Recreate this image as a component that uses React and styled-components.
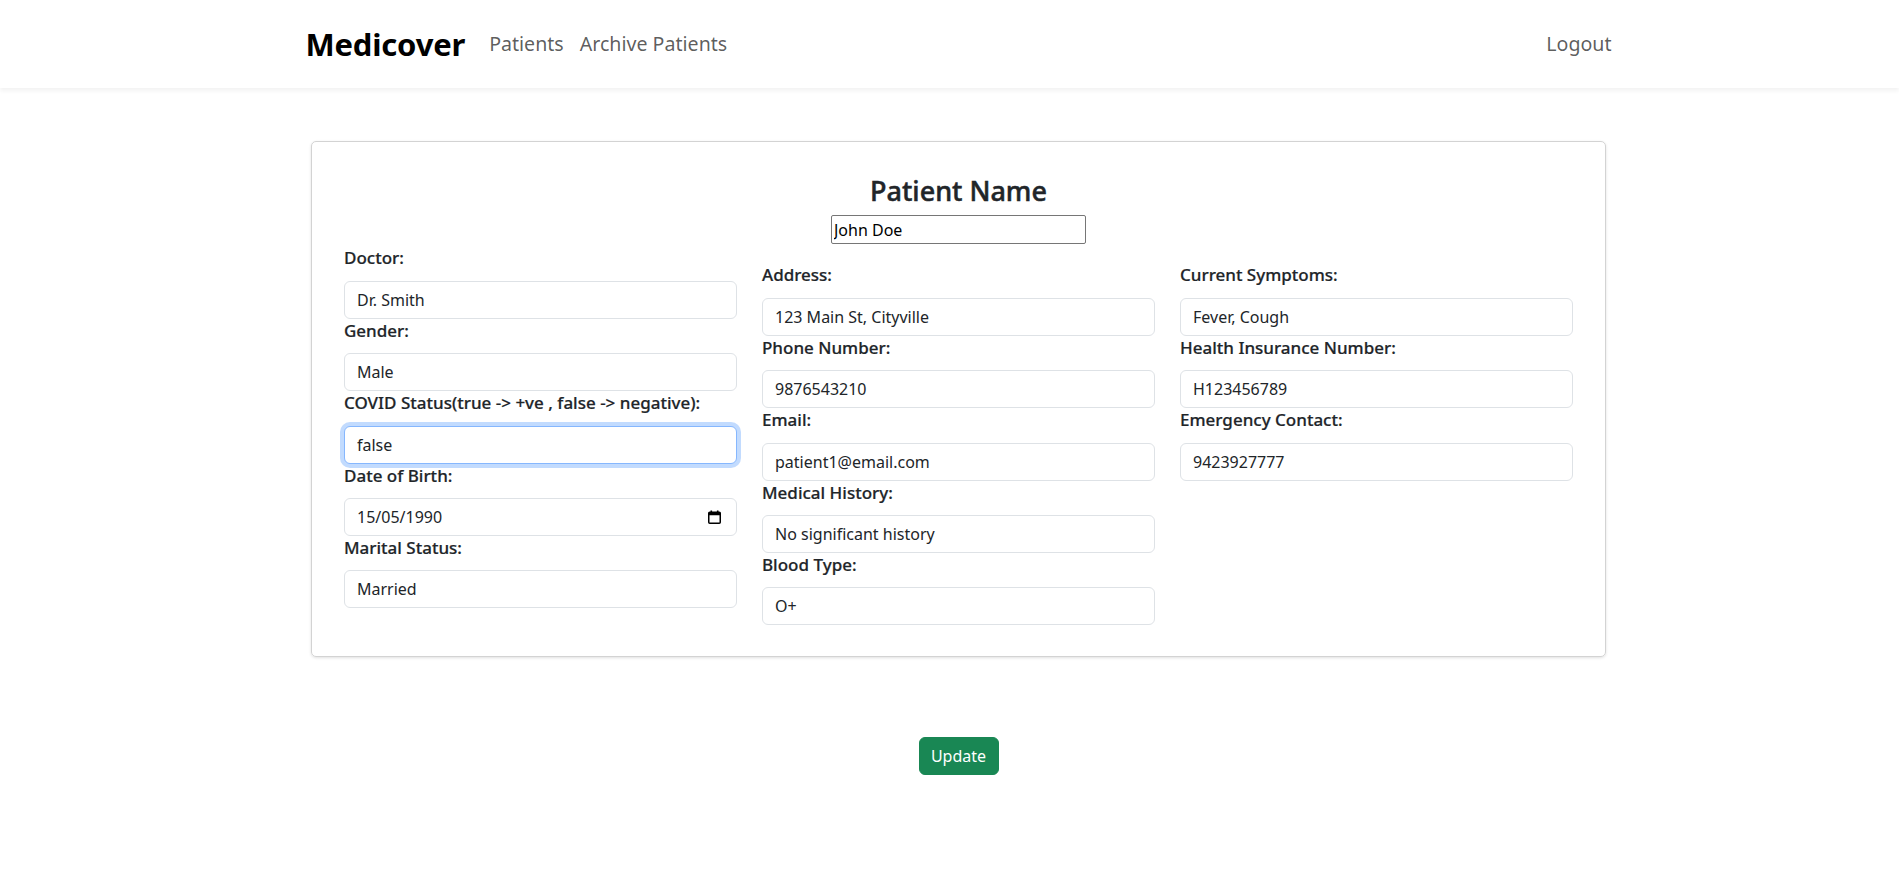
import React from 'react';
import styled, { createGlobalStyle, css } from 'styled-components';

const GlobalStyle = createGlobalStyle`
    html, body {
        margin: 0;
        padding: 0;
        background: #fff;
    }
    body {
        font-family: "Noto Sans", "Open Sans", sans-serif;
        font-size: 16px;
        line-height: 1.5;
        color: #212529;
    }
    * {
        box-sizing: border-box;
    }
`;

const NavBar = styled.nav`
    height: 88px;
    padding-left: 18px;
    background: #fff;
    box-shadow: 0 3px 4px rgba(0, 0, 0, 0.05);
`;
const NavInner = styled.div`
    max-width: 1306px;
    height: 100%;
    margin: 0 auto;
    display: flex;
    align-items: center;
`;
const Brand = styled.a`
    font-size: 31px;
    font-weight: 700;
    color: #000;
    text-decoration: none;
    letter-spacing: -0.2px;
    margin-right: 24px;
`;
const NavLinks = styled.div`
    flex: 1;
    display: flex;
    gap: 16px;
`;
const NavLink = styled.a`
    font-size: 19.6px;
    color: rgba(0, 0, 0, 0.65);
    text-decoration: none;
`;

const Content = styled.div`
    padding-left: 18px;
`;
const Main = styled.main`
    max-width: 1295px;
    margin: 53px auto 0;
    display: flex;
    flex-direction: column;
    align-items: center;
`;
const Card = styled.section`
    width: 100%;
    padding: 33px 32px 31px;
    border: 1px solid #d3d3d3;
    border-radius: 5px;
    box-shadow: 0 1px 3px rgba(0, 0, 0, 0.12);
    display: flex;
    flex-direction: column;
    align-items: center;
`;
const Title = styled.h3`
    margin: 0 0 8px;
    font-size: 27px;
    font-weight: 500;
    line-height: 1.2;
    -webkit-text-stroke: 0.5px #212529;
`;
const NameInput = styled.input`
    width: 255px;
    height: 29px;
    padding: 1px 2px;
    border: 1px solid #767676;
    border-radius: 2px;
    font-family: inherit;
    font-size: 16px;
    color: #000;
    outline: none;
`;
const Grid = styled.div`
    width: 100%;
    padding-top: 2px;
    display: grid;
    grid-template-columns: repeat(3, 1fr);
    column-gap: 25px;
    align-items: start;
`;
const Column = styled.div`
    display: flex;
    flex-direction: column;
    padding-top: ${(p) => p.offset || 0}px;
`;
const Label = styled.label`
    display: block;
    margin-bottom: 10.4px;
    font-size: 17px;
    font-weight: 500;
    line-height: 24px;
    color: #212529;
    -webkit-text-stroke: 0.2px #212529;
`;
const InputWrap = styled.div`
    position: relative;
`;
const Input = styled.input`
    display: block;
    width: 100%;
    height: 38px;
    padding: 6px 12px;
    border: 1px solid #dee2e6;
    border-radius: 6px;
    font-family: inherit;
    font-size: 16px;
    color: #212529;
    background: #fff;
    outline: none;
    ${(p) => p.focused && css`
        border-color: #86b7fe;
        box-shadow: 0 0 0 4px rgba(13, 110, 253, 0.25);
    `}
`;
const CalendarIcon = styled.svg`
    position: absolute;
    right: 16px;
    top: 12px;
    width: 13px;
    height: 14px;
    pointer-events: none;
`;

const UpdateButton = styled.button`
    margin-top: 80px;
    width: 80px;
    height: 38px;
    border: 1px solid #198754;
    border-radius: 6px;
    background: #198754;
    color: #fff;
    font-family: inherit;
    font-size: 16px;
    cursor: pointer;
`;

const columns = [
    {
        offset: 0,
        fields: [
            { label: 'Doctor:', value: 'Dr. Smith' },
            { label: 'Gender:', value: 'Male' },
            { label: 'COVID Status(true -> +ve , false -> negative):', value: 'false', focused: true },
            { label: 'Date of Birth:', value: '15/05/1990', date: true },
            { label: 'Marital Status:', value: 'Married' },
        ],
    },
    {
        offset: 17,
        fields: [
            { label: 'Address:', value: '123 Main St, Cityville' },
            { label: 'Phone Number:', value: '9876543210' },
            { label: 'Email:', value: 'patient1@email.com' },
            { label: 'Medical History:', value: 'No significant history' },
            { label: 'Blood Type:', value: 'O+' },
        ],
    },
    {
        offset: 17,
        fields: [
            { label: 'Current Symptoms:', value: 'Fever, Cough' },
            { label: 'Health Insurance Number:', value: 'H123456789' },
            { label: 'Emergency Contact:', value: '9423927777' },
        ],
    },
];

function Field ({ label, value, focused, date }) {
    const ref = React.useRef(null);

    React.useEffect(() => {
        if (focused && ref.current) {
            const el = ref.current;
            el.focus();
            el.setSelectionRange(value.length, value.length);
        }
    }, [focused, value]);

    return (
        <div>
            <Label>{label}</Label>
            <InputWrap>
                <Input ref={ref} defaultValue={value} focused={focused} />
                {date && (
                    <CalendarIcon viewBox="0 0 13 14">
                        <rect x="0.75" y="2.25" width="11.5" height="11" rx="1" fill="none" stroke="#000" strokeWidth="1.5" />
                        <rect x="0.75" y="2.25" width="11.5" height="3" fill="#000" />
                        <rect x="2.5" y="0.5" width="1.6" height="2.5" fill="#000" />
                        <rect x="8.9" y="0.5" width="1.6" height="2.5" fill="#000" />
                    </CalendarIcon>
                )}
            </InputWrap>
        </div>
    );
}

export default function App () {
    return (
        <>
            <GlobalStyle />
            <NavBar>
                <NavInner>
                    <Brand href="#">Medicover</Brand>
                    <NavLinks>
                        <NavLink href="#">Patients</NavLink>
                        <NavLink href="#">Archive Patients</NavLink>
                    </NavLinks>
                    <NavLink href="#">Logout</NavLink>
                </NavInner>
            </NavBar>
            <Content>
                <Main>
                    <Card>
                        <Title>Patient Name</Title>
                        <NameInput defaultValue="John Doe" />
                        <Grid>
                            {columns.map((col, idx) => (
                                <Column key={idx} offset={col.offset}>
                                    {col.fields.map((f) => (
                                        <Field key={f.label} {...f} />
                                    ))}
                                </Column>
                            ))}
                        </Grid>
                    </Card>
                    <UpdateButton>Update</UpdateButton>
                </Main>
            </Content>
        </>
    );
}
